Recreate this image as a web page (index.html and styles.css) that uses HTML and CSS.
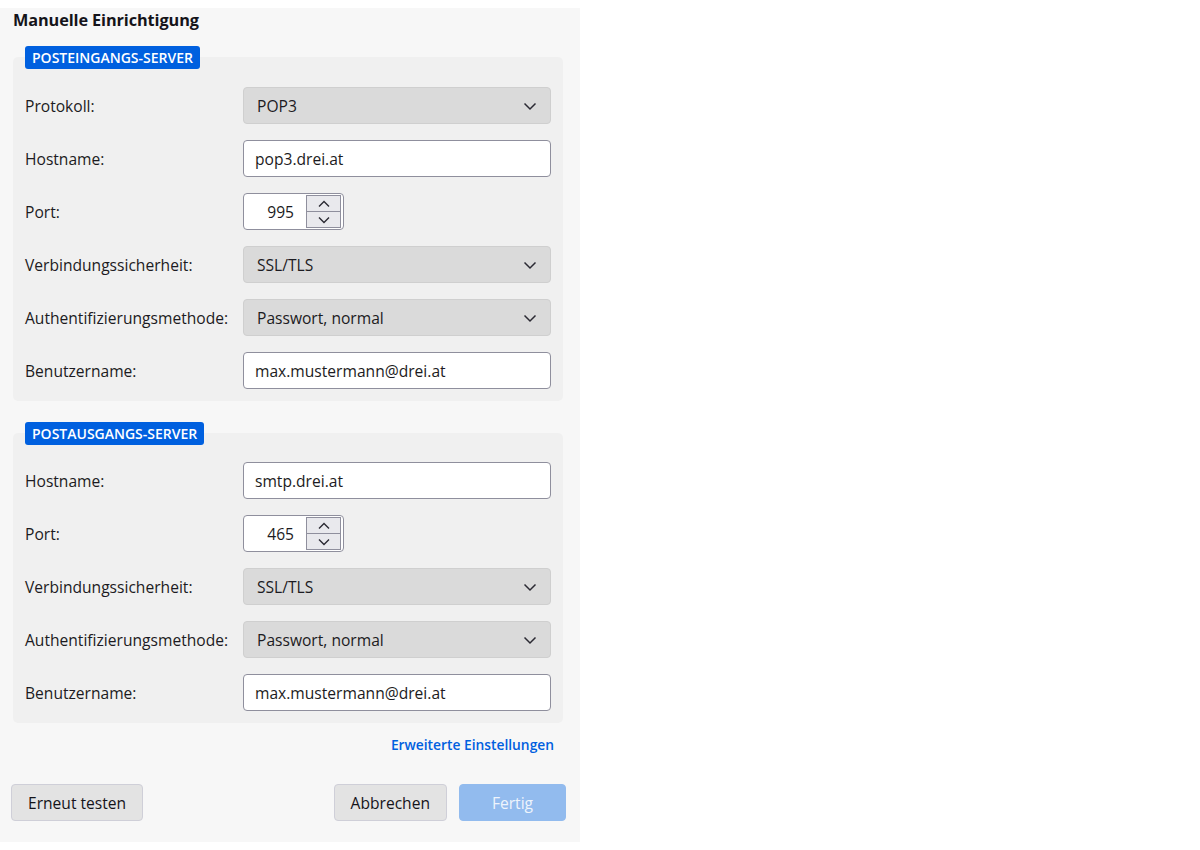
FILE: index.html
```html
<!DOCTYPE html>
<html lang="de">
<head>
<meta charset="utf-8">
<title>Manuelle Einrichtigung</title>
<link rel="stylesheet" href="styles.css">
</head>
<body>
<div class="panel">
  <h1 class="title">Manuelle Einrichtigung</h1>

  <section class="group">
    <div class="badge">POSTEINGANGS-SERVER</div>
    <div class="box">
      <div class="row">
        <span class="label">Protokoll:</span>
        <div class="select"><span>POP3</span><svg class="chev" viewBox="0 0 16 16"><path d="M2.5 5.5 L8 11 L13.5 5.5"/></svg></div>
      </div>
      <div class="row">
        <span class="label">Hostname:</span>
        <div class="input">pop3.drei.at</div>
      </div>
      <div class="row">
        <span class="label">Port:</span>
        <div class="spin">
          <span class="num">995</span>
          <div class="arrows">
            <div class="arrow"><svg viewBox="0 0 16 10"><path d="M3 7.5 L8 2.5 L13 7.5"/></svg></div>
            <div class="arrow"><svg viewBox="0 0 16 10"><path d="M3 2.5 L8 7.5 L13 2.5"/></svg></div>
          </div>
        </div>
      </div>
      <div class="row">
        <span class="label">Verbindungssicherheit:</span>
        <div class="select"><span>SSL/TLS</span><svg class="chev" viewBox="0 0 16 16"><path d="M2.5 5.5 L8 11 L13.5 5.5"/></svg></div>
      </div>
      <div class="row">
        <span class="label">Authentifizierungsmethode:</span>
        <div class="select"><span>Passwort, normal</span><svg class="chev" viewBox="0 0 16 16"><path d="M2.5 5.5 L8 11 L13.5 5.5"/></svg></div>
      </div>
      <div class="row">
        <span class="label">Benutzername:</span>
        <div class="input">max.mustermann@drei.at</div>
      </div>
    </div>
  </section>

  <section class="group second">
    <div class="badge">POSTAUSGANGS-SERVER</div>
    <div class="box">
      <div class="row">
        <span class="label">Hostname:</span>
        <div class="input">smtp.drei.at</div>
      </div>
      <div class="row">
        <span class="label">Port:</span>
        <div class="spin">
          <span class="num">465</span>
          <div class="arrows">
            <div class="arrow"><svg viewBox="0 0 16 10"><path d="M3 7.5 L8 2.5 L13 7.5"/></svg></div>
            <div class="arrow"><svg viewBox="0 0 16 10"><path d="M3 2.5 L8 7.5 L13 2.5"/></svg></div>
          </div>
        </div>
      </div>
      <div class="row">
        <span class="label">Verbindungssicherheit:</span>
        <div class="select"><span>SSL/TLS</span><svg class="chev" viewBox="0 0 16 16"><path d="M2.5 5.5 L8 11 L13.5 5.5"/></svg></div>
      </div>
      <div class="row">
        <span class="label">Authentifizierungsmethode:</span>
        <div class="select"><span>Passwort, normal</span><svg class="chev" viewBox="0 0 16 16"><path d="M2.5 5.5 L8 11 L13.5 5.5"/></svg></div>
      </div>
      <div class="row">
        <span class="label">Benutzername:</span>
        <div class="input">max.mustermann@drei.at</div>
      </div>
    </div>
  </section>

  <div class="linkrow"><a class="link" href="#">Erweiterte Einstellungen</a></div>

  <div class="buttons">
    <button class="btn">Erneut testen</button>
    <div class="right">
      <button class="btn">Abbrechen</button>
      <button class="btn primary">Fertig</button>
    </div>
  </div>
</div>
</body>
</html>
```

FILE: styles.css
```css
html, body {
  margin: 0;
  padding: 0;
  background: #ffffff;
}
body {
  font-family: "Open Sans", "Noto Sans", "Liberation Sans", sans-serif;
  color: #1c1b22;
  font-size: 15.6px;
}
.panel {
  width: 580px;
  height: 834px;
  margin-top: 8px;
  background: #f7f7f7;
  box-sizing: border-box;
  padding: 0 17px 0 13px;
  display: flex;
  flex-direction: column;
}
.title {
  margin: 0;
  font-size: 16.3px;
  font-weight: 700;
  line-height: 24px;
  color: #15141a;
  letter-spacing: -0.1px;
}
.group {
  display: flex;
  flex-direction: column;
  margin-top: 14px;
}
.group.second {
  margin-top: 21px;
}
.badge {
  align-self: flex-start;
  margin-left: 12px;
  position: relative;
  z-index: 1;
  background: #0060df;
  color: #ffffff;
  font-size: 14px;
  font-weight: 600;
  line-height: 23px;
  height: 23px;
  padding: 0 7px;
  border-radius: 3px;
  margin-bottom: -12px;
}
.box {
  background: #f0f0f0;
  border-radius: 5px;
  padding: 30px 12px 12px 12px;
  display: flex;
  flex-direction: column;
  gap: 16px;
}
.second .box {
  padding-top: 29px;
}
.row {
  display: flex;
  align-items: center;
  height: 37px;
}
.label {
  width: 218px;
  flex: none;
}
.select, .input {
  box-sizing: border-box;
  width: 308px;
  height: 37px;
  border-radius: 4px;
  display: flex;
  align-items: center;
  padding: 0 13px;
}
.select {
  background: #dadada;
  border: 1px solid #cfcfcf;
  justify-content: space-between;
  padding-right: 12px;
}
.input {
  background: #ffffff;
  border: 1px solid #8f8f9d;
  padding-left: 11px;
}
.chev {
  width: 16px;
  height: 16px;
  fill: none;
  stroke: #2b2a33;
  stroke-width: 1.5;
}
.spin {
  box-sizing: border-box;
  width: 101px;
  height: 37px;
  background: #ffffff;
  border: 1px solid #8f8f9d;
  border-radius: 4px;
  display: flex;
  align-items: center;
  padding: 1px 2px 1px 0;
}
.num {
  flex: 1;
  text-align: right;
  padding-right: 12px;
}
.arrows {
  width: 35px;
  height: 33px;
  display: flex;
  flex-direction: column;
  border: 1px solid #8f8f9d;
  box-sizing: border-box;
  background: #e9e9ed;
}
.arrow {
  flex: 1;
  display: flex;
  align-items: center;
  justify-content: center;
}
.arrow + .arrow {
  border-top: 1px solid #8f8f9d;
}
.arrow svg {
  width: 16px;
  height: 10px;
  fill: none;
  stroke: #2b2a33;
  stroke-width: 1.4;
}
.linkrow {
  display: flex;
  justify-content: flex-end;
  margin-top: 10px;
  padding-right: 9px;
}
.link {
  color: #0060df;
  text-decoration: none;
  font-size: 13.8px;
  font-weight: 600;
  line-height: 24px;
}
.buttons {
  display: flex;
  justify-content: space-between;
  margin-top: 27px;
  margin-left: -2px;
  margin-right: -3px;
}
.right {
  display: flex;
  gap: 12px;
}
.btn {
  font-family: inherit;
  font-size: 15.6px;
  color: #15141a;
  height: 37px;
  border: 1px solid #cfcfd8;
  border-radius: 4px;
  background: #e3e3e3;
  padding: 0 16px;
}
.btn.primary {
  background: #92bbee;
  border-color: #92bbee;
  color: #eef4fc;
  width: 107px;
}
```
